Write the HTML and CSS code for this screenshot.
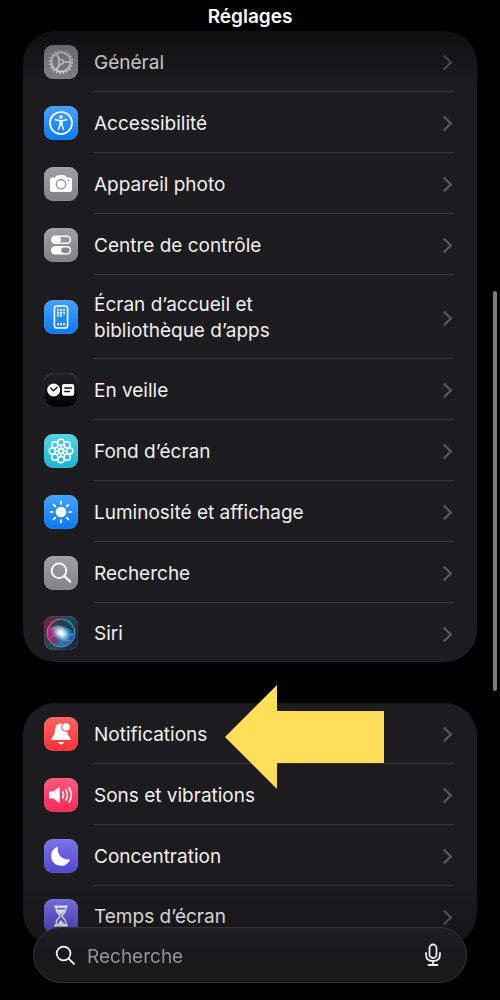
FILE: index.html
```
<!DOCTYPE html>
<html lang="fr">
<head>
<meta charset="utf-8">
<meta name="viewport" content="width=device-width, initial-scale=1.0">
  <title>Réglages</title>
  <link rel="stylesheet" href="styles.css">
</head>
<body>
  <header class="header">
    <h1>Réglages</h1>
  </header>
  <main class="content">
    <ul class="group">
      <li><a class="row" href="#general">
        <svg class="icon gray" viewBox="0 0 34 34">
          <g fill="none" stroke="#f0f0f0">
            <circle cx="17" cy="17" r="11.2" stroke-width="1.8" stroke-dasharray="1.6 1.92"/>
            <circle cx="17" cy="17" r="9.6" stroke-width="1.5"/>
            <circle cx="17" cy="17" r="2.3" stroke-width="1.3"/>
            <path d="M19.4 17H26.5M15.8 15L12.3 9M15.8 19L12.3 25" stroke-width="1.5"/>
          </g>
        </svg>
        <span class="label">Général</span>
      </a></li>
      <li><a class="row" href="#accessibilite">
        <svg class="icon blue" viewBox="0 0 34 34">
          <circle cx="17" cy="17" r="11" fill="none" stroke="#fff" stroke-width="1.7"/>
          <circle cx="17" cy="11" r="1.7" fill="#fff"/>
          <path d="M11.3 13.8L16 14.6H18L22.7 13.8M17 15V19M16.1 15V18.5L14.4 23.6M17.9 15V18.5L19.6 23.6" fill="none" stroke="#fff" stroke-width="1.4" stroke-linecap="round" stroke-linejoin="round"/>
        </svg>
        <span class="label">Accessibilité</span>
      </a></li>
      <li><a class="row" href="#photo">
        <svg class="icon gray" viewBox="0 0 34 34">
          <path d="M8.2 10.5H11L13 8.4Q13.4 8 14 8H20Q20.6 8 21 8.4L23 10.5H25.8Q28 10.5 28 12.7V22.8Q28 25 25.8 25H8.2Q6 25 6 22.8V12.7Q6 10.5 8.2 10.5Z" fill="#fff"/>
          <circle cx="17" cy="17.2" r="4.7" fill="#fff" stroke="#929297" stroke-width="1.4"/>
          <circle cx="24.4" cy="13.6" r="1" fill="#929297"/>
        </svg>
        <span class="label">Appareil photo</span>
      </a></li>
      <li><a class="row" href="#controle">
        <svg class="icon gray" viewBox="0 0 34 34">
          <rect x="7.8" y="8.2" width="18.6" height="7" rx="3.5" fill="none" stroke="#fff" stroke-width="1.6"/>
          <rect x="8.5" y="9" width="8.5" height="5.4" rx="2.7" fill="#fff"/>
          <rect x="7" y="18" width="20.2" height="8.6" rx="4.3" fill="#fff"/>
          <rect x="17.2" y="19.6" width="8.4" height="5.4" rx="2.7" fill="#88888c"/>
        </svg>
        <span class="label">Centre de contrôle</span>
      </a></li>
      <li><a class="row" href="#accueil">
        <svg class="icon blue" viewBox="0 0 34 34">
          <rect x="10.4" y="6" width="13.2" height="22" rx="2.6" fill="none" stroke="#fff" stroke-width="1.6"/>
          <path d="M13.2 9.9H21M13.2 12.7H21M13.2 15.5H18.2M13.2 24.3H21" stroke="#fff" stroke-width="1.9" stroke-dasharray="1.9 1"/>
        </svg>
        <span class="label">Écran d’accueil et<br>bibliothèque d’apps</span>
      </a></li>
      <li><a class="row" href="#veille">
        <svg class="icon black" viewBox="0 0 34 34">
          <circle cx="9.7" cy="17" r="6.5" fill="#fff"/>
          <path d="M6.8 15L9.5 17.8L13.3 14.3" fill="none" stroke="#111" stroke-width="1.3" stroke-linecap="round" stroke-linejoin="round"/>
          <rect x="18" y="11" width="12.2" height="11.8" rx="2" fill="#fff"/>
          <path d="M20.8 15H27.6M20.8 18.5H25.4" stroke="#111" stroke-width="1.4" stroke-linecap="round"/>
        </svg>
        <span class="label">En veille</span>
      </a></li>
      <li><a class="row" href="#fond">
        <svg class="icon cyan" viewBox="0 0 34 34">
          <g fill="none" stroke="#fff" stroke-width="1.5">
            <circle cx="17" cy="8.3" r="3.1"/>
            <circle cx="23.2" cy="10.8" r="3.1"/>
            <circle cx="25.7" cy="17" r="3.1"/>
            <circle cx="23.2" cy="23.2" r="3.1"/>
            <circle cx="17" cy="25.7" r="3.1"/>
            <circle cx="10.8" cy="23.2" r="3.1"/>
            <circle cx="8.3" cy="17" r="3.1"/>
            <circle cx="10.8" cy="10.8" r="3.1"/>
            <circle cx="17" cy="17" r="2.3"/>
            <path d="M17 11.4V14.5M17 19.5V22.6M11.4 17H14.5M19.5 17H22.6M13 13L15.3 15.3M18.7 18.7L21 21M21 13L18.7 15.3M15.3 18.7L13 21"/>
          </g>
        </svg>
        <span class="label">Fond d’écran</span>
      </a></li>
      <li><a class="row" href="#affichage">
        <svg class="icon blue" viewBox="0 0 34 34">
          <circle cx="17" cy="17" r="5.3" fill="#fff"/>
          <path d="M17 6.6V8.9M17 25.1V27.4M6.6 17H8.9M25.1 17H27.4M9.6 9.6L11.3 11.3M22.7 22.7L24.4 24.4M24.4 9.6L22.7 11.3M11.3 22.7L9.6 24.4" stroke="#fff" stroke-width="1.7" stroke-linecap="round"/>
        </svg>
        <span class="label">Luminosité et affichage</span>
      </a></li>
      <li><a class="row" href="#recherche">
        <svg class="icon gray" viewBox="0 0 34 34">
          <circle cx="15" cy="14.7" r="7.3" fill="none" stroke="#fff" stroke-width="1.8"/>
          <path d="M20.4 20.1L26.3 25.8" stroke="#fff" stroke-width="2.2" stroke-linecap="round"/>
        </svg>
        <span class="label">Recherche</span>
      </a></li>
      <li><a class="row" href="#siri">
        <svg class="icon siri" viewBox="0 0 34 34">
          <defs>
            <linearGradient id="orb" x1="0" y1="0.3" x2="1" y2="0.7">
              <stop offset="0" stop-color="#d51f68"/>
              <stop offset=".4" stop-color="#713783"/>
              <stop offset=".65" stop-color="#227eae"/>
              <stop offset="1" stop-color="#174cb0"/>
            </linearGradient>
            <radialGradient id="glow">
              <stop offset="0" stop-color="#fff"/>
              <stop offset=".35" stop-color="#e4f5fb" stop-opacity=".85"/>
              <stop offset="1" stop-color="#6ac9ed" stop-opacity="0"/>
            </radialGradient>
          </defs>
          <circle cx="17" cy="17" r="14" fill="url(#orb)" stroke="#85a3a9" stroke-width=".8"/>
          <path d="M6 11Q13 1 22 5Q30 9 30 17Q21 8 13 12Z" fill="#173c45" opacity=".85"/>
          <path d="M7 13Q16 8 20 15Q24 21 30 18" fill="none" stroke="#49c6b2" stroke-width="1.6" opacity=".5"/>
          <path d="M6 22Q13 15 18 21Q23 27 27 24" fill="none" stroke="#f377a2" stroke-width="1.6" opacity=".4"/>
          <ellipse cx="17" cy="17" rx="11" ry="8" fill="url(#glow)" transform="rotate(35 17 17)"/>
        </svg>
        <span class="label">Siri</span>
      </a></li>
    </ul>

    <ul class="group">
      <li class="marked"><a class="row" href="#notifications">
        <svg class="icon red" viewBox="0 0 34 34">
          <path d="M17 6.5C12.4 6.5 11 10.1 10.8 14.5C10.6 19 7.3 20.4 7.3 23H26.7C26.7 20.4 23.4 19 23.2 14.5C23 10.1 21.6 6.5 17 6.5Z" fill="#fff"/>
          <path d="M14 25H20Q19.2 27.4 17 27.4Q14.8 27.4 14 25Z" fill="#fff"/>
          <circle cx="22" cy="10" r="4.3" fill="#fff" stroke="#ff5654" stroke-width="1.2"/>
        </svg>
        <span class="label">Notifications</span>
      </a>
      <!-- flèche vers Notifications -->
      <svg class="arrow" viewBox="0 0 160 104" aria-hidden="true">
        <path d="M0 52L52 0V26H159V78H52V104Z" fill="#ffde59"/>
      </svg>
      </li>
      <li><a class="row" href="#sons">
        <svg class="icon pink" viewBox="0 0 34 34">
          <path d="M6.3 13.5H9.5L14.2 9.7Q15.7 8.7 15.7 10.4V23.6Q15.7 25.3 14.2 24.3L9.5 20.5H6.3Q5 20.5 5 19.2V14.8Q5 13.5 6.3 13.5Z" fill="#fff"/>
          <path d="M18.7 14Q20.5 17 18.7 20M21.8 11.8Q25 17 21.8 22.2M25 9.8Q29.6 17 25 24.2" fill="none" stroke="#fff" stroke-width="1.6" stroke-linecap="round"/>
        </svg>
        <span class="label">Sons et vibrations</span>
      </a></li>
      <li><a class="row" href="#concentration">
        <svg class="icon purple" viewBox="0 0 34 34">
          <path d="M14 7.6C12.6 14.8 17.5 21.6 26 20.2C24.8 24.2 21.4 26.8 17.2 26.8C11.6 26.8 7.2 22.6 7.2 17C7.2 12.6 9.9 9 14 7.6Z" fill="#fff"/>
        </svg>
        <span class="label">Concentration</span>
      </a></li>
      <li><a class="row" href="#temps">
        <svg class="icon purple" viewBox="0 0 34 34">
          <path d="M11 7.5H23M11 26.5H23" stroke="#f1effb" stroke-width="2.2" stroke-linecap="round"/>
          <path d="M12.3 8V11C12.3 14 16 15.2 16 17S12.3 20 12.3 23V26H21.7V23C21.7 20 18 18.8 18 17S21.7 14 21.7 11V8Z" fill="none" stroke="#f1effb" stroke-width="1.5"/>
          <path d="M13 10.5H21V11Q21 12.8 17 15.8Q13 12.8 13 11ZM17 21L20.6 25.2H13.4Z" fill="#f1effb"/>
        </svg>
        <span class="label">Temps d’écran</span>
      </a></li>
    </ul>
  </main>

  <div class="fade-top"></div>
  <div class="fade-bottom"></div>
  <div class="scrollbar"></div>

  <form class="search" role="search">
    <svg class="loupe" viewBox="0 0 22 22">
      <circle cx="9" cy="9" r="7.2" fill="none" stroke="#f4f4f4" stroke-width="1.8"/>
      <path d="M14.3 14.3L19.8 19.8" stroke="#f4f4f4" stroke-width="2" stroke-linecap="round"/>
    </svg>
    <input type="text" placeholder="Recherche" aria-label="Recherche">
    <button type="button" class="mic" aria-label="Dicter">
      <svg viewBox="0 0 18 24">
        <g fill="none" stroke="#ededed" stroke-width="1.8" stroke-linecap="round">
          <rect x="5.5" y="1.5" width="7" height="13.5" rx="3.5"/>
          <path d="M2 10V11.5Q2 18 9 18T16 11.5V10M9 18V22M4.5 22H13.5"/>
        </g>
      </svg>
    </button>
  </form>
</body>
</html>
```
FILE: styles.css
```
* {
  box-sizing: border-box;
}
body {
  margin: 0;
  height: 100vh;
  overflow: hidden;
  background-color: #000;
  color: #f0f0f2;
  font-family: Inter, "Liberation Sans", sans-serif;
  font-size: 19px;
  line-height: 26px;
}
.header {
  padding: 4px 0 1px;
  text-align: center;
}
h1 {
  margin: 0;
  color: #fff;
  font-size: 19px;
  font-weight: 600;
  line-height: 26px;
}
.content {
  padding: 0 23px;
}
.group {
  list-style: none;
  margin: 0 0 41px;
  padding: 0;
  border-radius: 32px;
  background-color: #1c1c1e;
}
.marked {
  position: relative;
}
.row {
  display: flex;
  align-items: center;
  gap: 16px;
  padding: 0 23px 0 21px;
  color: inherit;
  text-decoration: none;
}
.icon {
  flex: none;
  width: 34px;
  height: 34px;
  border-radius: 9px;
  box-shadow: inset 0 0 1px rgba(255, 255, 255, 0.5);
}
.label {
  flex: 1;
  display: flex;
  align-items: center;
  justify-content: space-between;
  min-height: 61px;
  padding: 17px 4px 14px 0;
  border-bottom: 1px solid #353538;
}
li:last-child .label {
  min-height: 59px;
  border-bottom: none;
}
/* chevron */
.label::after {
  content: "";
  width: 9px;
  height: 9px;
  border-top: 2px solid #5c5c60;
  border-right: 2px solid #5c5c60;
  transform: rotate(45deg);
}

.gray { background: linear-gradient(#a0a0a4, #828286); }
.blue { background: linear-gradient(#46a2fa, #087af5); }
.black { background: linear-gradient(#242424, #000); }
.cyan { background: linear-gradient(#55d3e5, #1eb4d3); }
.siri { background: linear-gradient(120deg, #7d153f, #194e55 50%, #151d4a); }
.red { background: linear-gradient(#ff6461, #fb3135); }
.pink { background: linear-gradient(#fd5a7b, #fb2758); }
.purple { background: linear-gradient(#7b74eb, #5147cc); }

.arrow {
  position: absolute;
  left: 202px;
  top: -18px;
  width: 160px;
  height: 104px;
}
.fade-top,
.fade-bottom {
  position: fixed;
  left: 0;
  right: 0;
  pointer-events: none;
}
.fade-top {
  top: 28px;
  height: 56px;
  background: linear-gradient(rgba(0, 0, 0, 0.5), rgba(0, 0, 0, 0));
}
.fade-bottom {
  bottom: 0;
  height: 120px;
  background: linear-gradient(rgba(0, 0, 0, 0), rgba(0, 0, 0, 0.4));
}
.scrollbar {
  position: fixed;
  top: 291px;
  right: 3px;
  width: 4px;
  height: 400px;
  border-radius: 2px;
  background-color: #7c7c7e;
}

.search {
  position: fixed;
  left: 33px;
  right: 33px;
  bottom: 17px;
  display: flex;
  align-items: center;
  gap: 11px;
  height: 56px;
  padding: 0 24px 0 21px;
  border: 1px solid #343437;
  border-radius: 28px;
  background: linear-gradient(#1e1e23, #19191a 50%);
}
.loupe {
  flex: none;
  width: 21px;
  height: 21px;
}
.search input {
  flex: 1;
  min-width: 0;
  padding: 3px 0 0;
  border: none;
  outline: none;
  background: none;
  color: #fff;
  font: inherit;
}
.search input::placeholder {
  color: #939395;
  opacity: 1;
}
.mic {
  width: 18px;
  height: 24px;
  padding: 0;
  border: none;
  background: none;
}
.mic svg {
  display: block;
}
```
